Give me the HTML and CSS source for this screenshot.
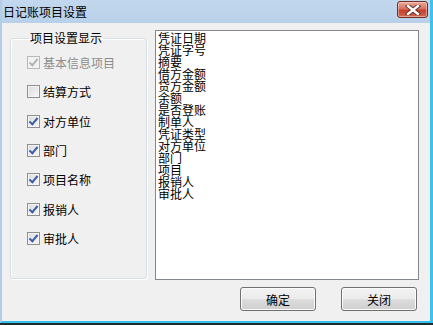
FILE: index.html
```html
<!DOCTYPE html>
<html lang="zh-CN">
<head>
    <meta charset="UTF-8">
    <title>日记账项目设置</title>
    <link rel="stylesheet" href="styles.css">
</head>
<body>
    <div class="window">
        <div class="titlebar">
            <span class="title">日记账项目设置</span>
            <button class="close-btn" title="关闭">
                <svg width="16" height="10" viewBox="0 0 16 10">
                    <path d="M3 1 L13 9 M13 1 L3 9" stroke="#5a2a22" stroke-width="4.2" stroke-linecap="square"/>
                    <path d="M3 1 L13 9 M13 1 L3 9" stroke="#ffffff" stroke-width="2.4" stroke-linecap="square"/>
                </svg>
            </button>
        </div>
        <div class="content">
            <fieldset class="group">
                <legend>项目设置显示</legend>
                <label class="check-row disabled"><span class="box checked"></span>基本信息项目</label>
                <label class="check-row"><span class="box"></span>结算方式</label>
                <label class="check-row"><span class="box checked"></span>对方单位</label>
                <label class="check-row"><span class="box checked"></span>部门</label>
                <label class="check-row"><span class="box checked"></span>项目名称</label>
                <label class="check-row"><span class="box checked"></span>报销人</label>
                <label class="check-row"><span class="box checked"></span>审批人</label>
            </fieldset>
            <div class="listbox">
                <div>凭证日期</div>
                <div>凭证字号</div>
                <div>摘要</div>
                <div>借方金额</div>
                <div>贷方金额</div>
                <div>余额</div>
                <div>是否登账</div>
                <div>制单人</div>
                <div>凭证类型</div>
                <div>对方单位</div>
                <div>部门</div>
                <div>项目</div>
                <div>报销人</div>
                <div>审批人</div>
            </div>
        </div>
        <div class="actions">
            <button class="btn">确定</button>
            <button class="btn">关闭</button>
        </div>
    </div>
</body>
</html>
```

FILE: styles.css
```css
body {
    margin: 0;
    background-color: #1f2b33;
    font-family: "Noto Sans CJK SC", "Liberation Sans", sans-serif;
    font-size: 12px;
    color: #000;
}
.window {
    width: 433px;
    height: 323px;
    box-sizing: border-box;
    background-color: #f0f0f0;
    border-left: 2px solid #b3cde9;
    border-right: 3px solid #3dc2ee;
    border-bottom: 2px solid #35c0ec;
}
.titlebar {
    height: 23px;
    display: flex;
    align-items: center;
    justify-content: space-between;
    background: linear-gradient(#c3d8ee, #b8d0e9);
    padding-left: 1px;
    padding-right: 2px;
}
.title {
    font-size: 12px;
    line-height: 14px;
    color: #000;
}
.close-btn {
    width: 31px;
    height: 17px;
    margin-top: -4px;
    padding: 0;
    display: flex;
    align-items: center;
    justify-content: center;
    border: 1px solid #6e3026;
    border-radius: 3px;
    background: linear-gradient(#e9ab9c, #d9705f 45%, #c4412e 55%, #d06a52);
    box-shadow: inset 0 0 0 1px rgba(255, 220, 210, 0.5);
}
.content {
    display: flex;
    padding: 7px 0 0 8px;
}
.group {
    width: 137px;
    height: 249px;
    box-sizing: border-box;
    margin: 0;
    padding: 2px 0 0 16px;
    border: 1px solid #d5dfe5;
    border-radius: 3px;
    box-shadow: inset 1px 1px 0 #fff, 1px 1px 0 #fff;
}
.group legend {
    margin-left: 2px;
    padding: 0 1px;
    line-height: 16px;
}
.check-row {
    display: flex;
    align-items: center;
    height: 29.3px;
    gap: 3px;
}
.check-row.disabled {
    color: #8d8d8d;
}
.box {
    width: 13px;
    height: 13px;
    box-sizing: border-box;
    border: 1px solid #8f8f8f;
    background: linear-gradient(135deg, #dcdcdc, #f6f6f6);
    box-shadow: inset 0 0 0 1px #f4f4f4;
    position: relative;
}
.box.checked::after {
    content: "";
    position: absolute;
    left: 3px;
    top: 0px;
    width: 3px;
    height: 7px;
    border: solid #3c5ea8;
    border-width: 0 2px 2px 0;
    transform: rotate(40deg);
}
.disabled .box {
    border-color: #b8b8b8;
    background: #f2f2f2;
}
.disabled .box.checked::after {
    border-color: #b2b2b2;
}
.listbox {
    width: 264px;
    height: 250px;
    box-sizing: border-box;
    margin-left: 8px;
    padding: 1px 2px;
    background-color: #fff;
    border: 1px solid #828790;
    line-height: 12px;
}
.actions {
    display: flex;
    justify-content: flex-end;
    gap: 25px;
    padding: 7px 13px 0 0;
}
.btn {
    width: 76px;
    height: 24px;
    padding: 0;
    font-family: inherit;
    font-size: 12px;
    color: #000;
    border: 1px solid #707070;
    border-radius: 3px;
    background: linear-gradient(#f2f2f2, #ebebeb 50%, #dddddd 51%, #cfcfcf);
    box-shadow: inset 0 0 0 1px #fcfcfc;
}
```
